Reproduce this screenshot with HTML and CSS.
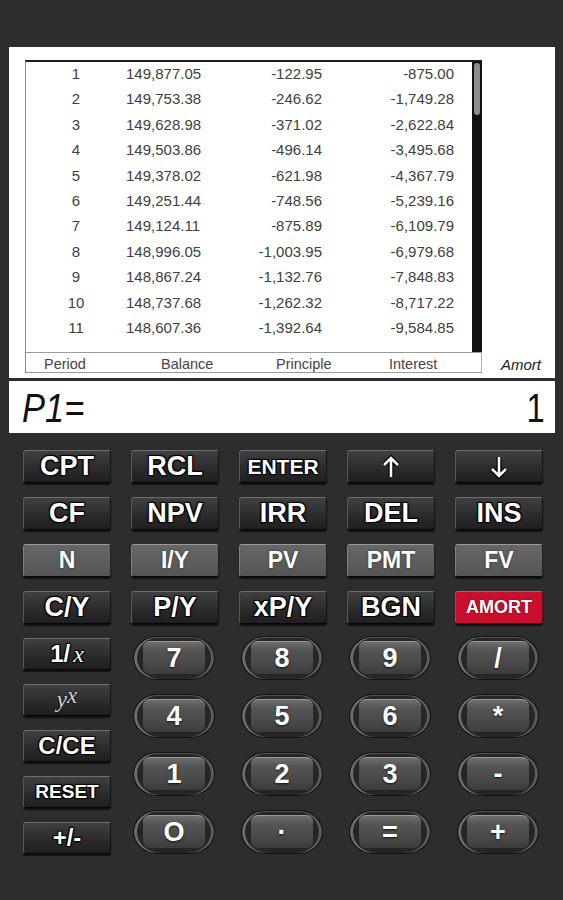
FILE: index.html
```html
<!DOCTYPE html>
<html lang="en">
<head>
  <meta charset="UTF-8" />
  <meta name="viewport" content="width=device-width, initial-scale=1.0" />
  <title>Financial Calculator</title>
  <link rel="stylesheet" href="styles.css">
</head>
<body>
  <div class="screen">
    <div class="amort-panel">
      <div class="amort-table">
        <div class="rows">
          <div class="row"><span>1</span><span>149,877.05</span><span>-122.95</span><span>-875.00</span></div>
          <div class="row"><span>2</span><span>149,753.38</span><span>-246.62</span><span>-1,749.28</span></div>
          <div class="row"><span>3</span><span>149,628.98</span><span>-371.02</span><span>-2,622.84</span></div>
          <div class="row"><span>4</span><span>149,503.86</span><span>-496.14</span><span>-3,495.68</span></div>
          <div class="row"><span>5</span><span>149,378.02</span><span>-621.98</span><span>-4,367.79</span></div>
          <div class="row"><span>6</span><span>149,251.44</span><span>-748.56</span><span>-5,239.16</span></div>
          <div class="row"><span>7</span><span>149,124.11</span><span>-875.89</span><span>-6,109.79</span></div>
          <div class="row"><span>8</span><span>148,996.05</span><span>-1,003.95</span><span>-6,979.68</span></div>
          <div class="row"><span>9</span><span>148,867.24</span><span>-1,132.76</span><span>-7,848.83</span></div>
          <div class="row"><span>10</span><span>148,737.68</span><span>-1,262.32</span><span>-8,717.22</span></div>
          <div class="row"><span>11</span><span>148,607.36</span><span>-1,392.64</span><span>-9,584.85</span></div>
        </div>
        <div class="scrollbar"><div class="thumb"></div></div>
        <div class="head">
          <span>Period</span><span>Balance</span><span>Principle</span><span>Interest</span>
        </div>
      </div>
      <div class="mode">Amort</div>
    </div>
    <div class="display">
      <span class="label">P1=</span>
      <span class="value">1</span>
    </div>
  </div>

  <div class="keypad">
    <div class="fkeys">
      <button class="fk">CPT</button>
      <button class="fk">RCL</button>
      <button class="fk small">ENTER</button>
      <button class="fk">
        <svg width="20" height="24" viewBox="0 0 20 24"><path d="M10 22V3M3 10l7-7 7 7" fill="none" stroke="#000" stroke-width="5"/><path d="M10 22V3M3 10l7-7 7 7" fill="none" stroke="#fff" stroke-width="2.6"/></svg>
      </button>
      <button class="fk">
        <svg width="20" height="24" viewBox="0 0 20 24"><path d="M10 2v19M3 14l7 7 7-7" fill="none" stroke="#000" stroke-width="5"/><path d="M10 2v19M3 14l7 7 7-7" fill="none" stroke="#fff" stroke-width="2.6"/></svg>
      </button>

      <button class="fk">CF</button>
      <button class="fk">NPV</button>
      <button class="fk">IRR</button>
      <button class="fk">DEL</button>
      <button class="fk">INS</button>

      <button class="fk light">N</button>
      <button class="fk light">I/Y</button>
      <button class="fk light">PV</button>
      <button class="fk light">PMT</button>
      <button class="fk light">FV</button>

      <button class="fk">C/Y</button>
      <button class="fk">P/Y</button>
      <button class="fk">xP/Y</button>
      <button class="fk">BGN</button>
      <button class="fk red">AMORT</button>
    </div>

    <div class="lower">
      <div class="side">
        <button class="fk sk">1/<i class="serif">x</i></button>
        <button class="fk sk pow"><i class="serif">y</i><i class="serif sup">x</i></button>
        <button class="fk sk">C/CE</button>
        <button class="fk sk reset">RESET</button>
        <button class="fk sk">+/-</button>
      </div>
      <div class="numpad">
        <button class="nk"><span>7</span></button>
        <button class="nk"><span>8</span></button>
        <button class="nk"><span>9</span></button>
        <button class="nk"><span>/</span></button>
        <button class="nk"><span>4</span></button>
        <button class="nk"><span>5</span></button>
        <button class="nk"><span>6</span></button>
        <button class="nk"><span>*</span></button>
        <button class="nk"><span>1</span></button>
        <button class="nk"><span>2</span></button>
        <button class="nk"><span>3</span></button>
        <button class="nk"><span>-</span></button>
        <button class="nk"><span>O</span></button>
        <button class="nk"><span>·</span></button>
        <button class="nk"><span>=</span></button>
        <button class="nk"><span>+</span></button>
      </div>
    </div>
  </div>
</body>
</html>
```

FILE: styles.css
```css
* {
  box-sizing: border-box;
  font-family: 'Liberation Sans', Arial, sans-serif;
}
body {
  margin: 0;
  width: 563px;
  height: 900px;
  background: #2d2d2d;
  overflow: hidden;
}

/* screen */
.screen {
  margin: 47px 0 0 9px;
  width: 546px;
}
.amort-panel {
  display: flex;
  align-items: flex-end;
  height: 331px;
  background: #fff;
  padding: 13px 0 5px 16px;
}
.amort-table {
  display: grid;
  grid-template-columns: 1fr 10px;
  grid-template-rows: 1fr 21px;
  width: 457px;
  height: 313px;
  border-top: 2px solid #1c1c1c;
  border-left: 1px solid #8a8a8a;
}
.row {
  display: grid;
  grid-template-columns: 100px 74px 122px 132px;
  height: 25.4px;
  line-height: 24px;
  font-size: 15px;
  color: #404040;
}
.row span {
  text-align: right;
}
.row span:first-child {
  text-align: center;
}
.scrollbar {
  background: #111;
  padding: 1px 2px;
}
.thumb {
  height: 52px;
  background: #8c8c8c;
  border-radius: 3px;
}
.head {
  grid-column: 1 / 3;
  display: grid;
  grid-template-columns: 117px 115px 113px 1fr;
  padding-left: 18px;
  border-top: 1px solid #9a9a9a;
  border-right: 1px solid #b0b0b0;
  border-bottom: 1px solid #9a9a9a;
  font-size: 14.5px;
  line-height: 22px;
  color: #444;
}
.mode {
  margin: 0 0 -1px 19px;
  font-size: 15px;
  font-style: italic;
  color: #222;
  line-height: 18px;
}
.display {
  display: flex;
  justify-content: space-between;
  align-items: center;
  height: 52px;
  margin-top: 3px;
  padding: 3px 10px 0 13px;
  background: #fff;
  font-size: 41px;
  font-style: italic;
  color: #111;
}
.display .label {
  display: inline-block;
  transform: scaleX(0.84);
  transform-origin: left center;
}
.display .value {
  display: inline-block;
  font-style: normal;
  font-weight: 300;
  transform: scaleX(0.8);
  transform-origin: right center;
}

/* keys */
.keypad {
  padding: 17px 0 0 23px;
}
.fkeys {
  display: grid;
  grid-template-columns: repeat(5, 88px);
  grid-auto-rows: 33px;
  column-gap: 20px;
  row-gap: 14px;
}
.fk {
  display: flex;
  align-items: center;
  justify-content: center;
  padding: 0;
  background: linear-gradient(#404040, #2a2a2a 60%, #1f1f1f);
  border: 1px solid;
  border-color: #6e6e6e #151515 #050505 #5a5a5a;
  border-radius: 3px;
  box-shadow: 0 2px 1px #111;
  color: #fff;
  font-size: 27px;
  font-weight: bold;
  text-shadow: 1px 1px 0 #000, -1px -1px 0 #000, 1px -1px 0 #000, -1px 1px 0 #000, 0 0 3px #000;
}
.fk.small {
  font-size: 21px;
}
.fk.light {
  background: linear-gradient(#666, #555);
  border-color: #9a9a9a #222 #0a0a0a #808080;
  font-size: 23px;
  text-shadow: 0 0 2px #222;
}
.fk.red {
  background: #c8102e;
  border-color: #e0485e #6a0010 #40000a #d83048;
  font-size: 18px;
  text-shadow: 0 0 2px #500;
}
.lower {
  display: flex;
  gap: 22px;
  margin-top: 12px;
}
.side {
  display: flex;
  flex-direction: column;
  gap: 14px;
  padding-top: 2px;
}
.sk {
  width: 88px;
  height: 32px;
  font-size: 24px;
}
.sk .serif {
  font-family: 'Liberation Serif', serif;
  font-weight: normal;
  margin-left: 3px;
}
.pow {
  color: #d0d0d0;
  font-size: 23px;
  text-shadow: 0 0 2px #000;
}
.pow .serif {
  margin: 0;
}
.pow .sup {
  position: relative;
  top: -4px;
}
.reset {
  font-size: 19px;
}
.numpad {
  display: grid;
  grid-template-columns: repeat(4, 82px);
  grid-auto-rows: 44px;
  column-gap: 26px;
  row-gap: 14px;
}
.nk {
  padding: 4px 9px 5px;
  background: #262626;
  border: 1px solid #141414;
  border-radius: 24px / 50%;
  box-shadow: inset 3px 0 0 #6c6c6c, inset -3px 0 0 #5c5c5c, inset 0 1px 0 #505050;
}
.nk span {
  display: flex;
  align-items: center;
  justify-content: center;
  height: 100%;
  background: linear-gradient(#6e6e6e, #555 25%, #484848 70%, #3c3c3c);
  border-top: 1px solid #999;
  border-radius: 7px;
  color: #fff;
  font-size: 27px;
  font-weight: bold;
  text-shadow: 0 1px 2px #111;
}
```
